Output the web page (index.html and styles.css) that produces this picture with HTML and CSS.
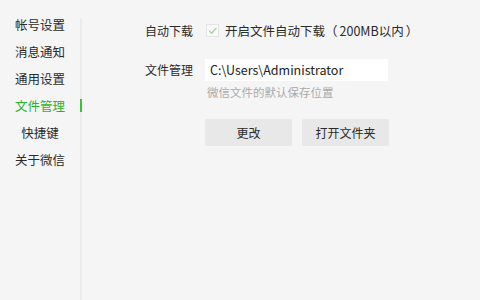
FILE: index.html
```html
<!DOCTYPE html>
<html lang="zh-CN">
<head>
<meta charset="utf-8">
<link rel="stylesheet" href="styles.css">
</head>
<body>
<div class="window">
  <nav class="sidebar">
    <div class="nav-item">帐号设置</div>
    <div class="nav-item">消息通知</div>
    <div class="nav-item">通用设置</div>
    <div class="nav-item active">文件管理</div>
    <div class="nav-item">快捷键</div>
    <div class="nav-item">关于微信</div>
  </nav>
  <div class="divider"></div>
  <main class="content">
    <div class="row row-auto">
      <span class="label">自动下载</span>
      <label class="check">
        <span class="box"><svg viewBox="0 0 13 13" width="13" height="13"><path d="M3 6.6 L5.6 9.2 L10.4 4" fill="none" stroke="#9ad79a" stroke-width="1.3"/></svg></span>
        <span class="check-text">开启文件自动下载<span class="paren-open">（</span>200MB以内<span class="paren-close">）</span></span>
      </label>
    </div>
    <div class="row row-path">
      <span class="label">文件管理</span>
      <div class="path-col">
        <div class="path-input">C:\Users\Administrator</div>
        <div class="hint">微信文件的默认保存位置</div>
      </div>
    </div>
    <div class="buttons">
      <button class="btn">更改</button>
      <button class="btn">打开文件夹</button>
    </div>
  </main>
</div>
</body>
</html>
```
FILE: styles.css
```css
html, body {
  margin: 0;
  padding: 0;
  background: #f5f5f5;
  width: 480px;
  height: 300px;
  overflow: hidden;
  font-family: "Noto Sans CJK SC", "Noto Sans", sans-serif;
  font-size: 12px;
  color: #333;
}
.window {
  display: flex;
  height: 300px;
}
.sidebar {
  width: 80px;
  padding-top: 11px;
  display: flex;
  flex-direction: column;
}
.nav-item {
  height: 27px;
  line-height: 27px;
  text-align: center;
  font-size: 12.5px;
  color: #2a2a2a;
  position: relative;
}
.nav-item.active {
  color: #2bb32b;
}
.nav-item.active::after {
  content: "";
  position: absolute;
  left: 80px;
  top: 7px;
  width: 2px;
  height: 13px;
  background: #3cc13c;
}
.divider {
  width: 2px;
  margin-top: 18px;
  background: #ebebeb;
}
.content {
  flex: 1;
  padding-left: 63px;
  padding-top: 20px;
}
.row {
  display: flex;
  align-items: flex-start;
}
.label {
  width: 60px;
  flex: none;
  font-size: 12px;
  color: #2a2a2a;
}
.row-auto {
  height: 20px;
  align-items: center;
}
.check {
  display: flex;
  align-items: center;
}
.box {
  width: 13px;
  height: 13px;
  box-sizing: border-box;
  border: 1px solid #e4e4e4;
  background: #fafafa;
  display: flex;
  margin-right: 6px;
  margin-left: 1px;
}
.box svg {
  margin: -1px;
}
.check-text {
  font-size: 12.5px;
  color: #2a2a2a;
}
.paren-open {
  margin-right: 2px;
}
.paren-close {
  margin-left: 2px;
}
.row-path {
  margin-top: 19px;
}
.row-path .label {
  line-height: 22px;
}
.path-input {
  width: 183px;
  height: 22px;
  box-sizing: border-box;
  background: #fff;
  padding-left: 5px;
  line-height: 22px;
  font-size: 12.5px;
  color: #222;
}
.hint {
  margin-top: 2px;
  padding-left: 2px;
  font-size: 11.5px;
  color: #aaa;
  line-height: 18px;
}
.buttons {
  display: flex;
  gap: 10px;
  margin-left: 60px;
  margin-top: 18px;
}
.btn {
  width: 87px;
  height: 27px;
  border: none;
  border-radius: 2px;
  background: #e8e8e8;
  font-family: inherit;
  font-size: 12px;
  color: #2a2a2a;
  padding: 0;
}
```
